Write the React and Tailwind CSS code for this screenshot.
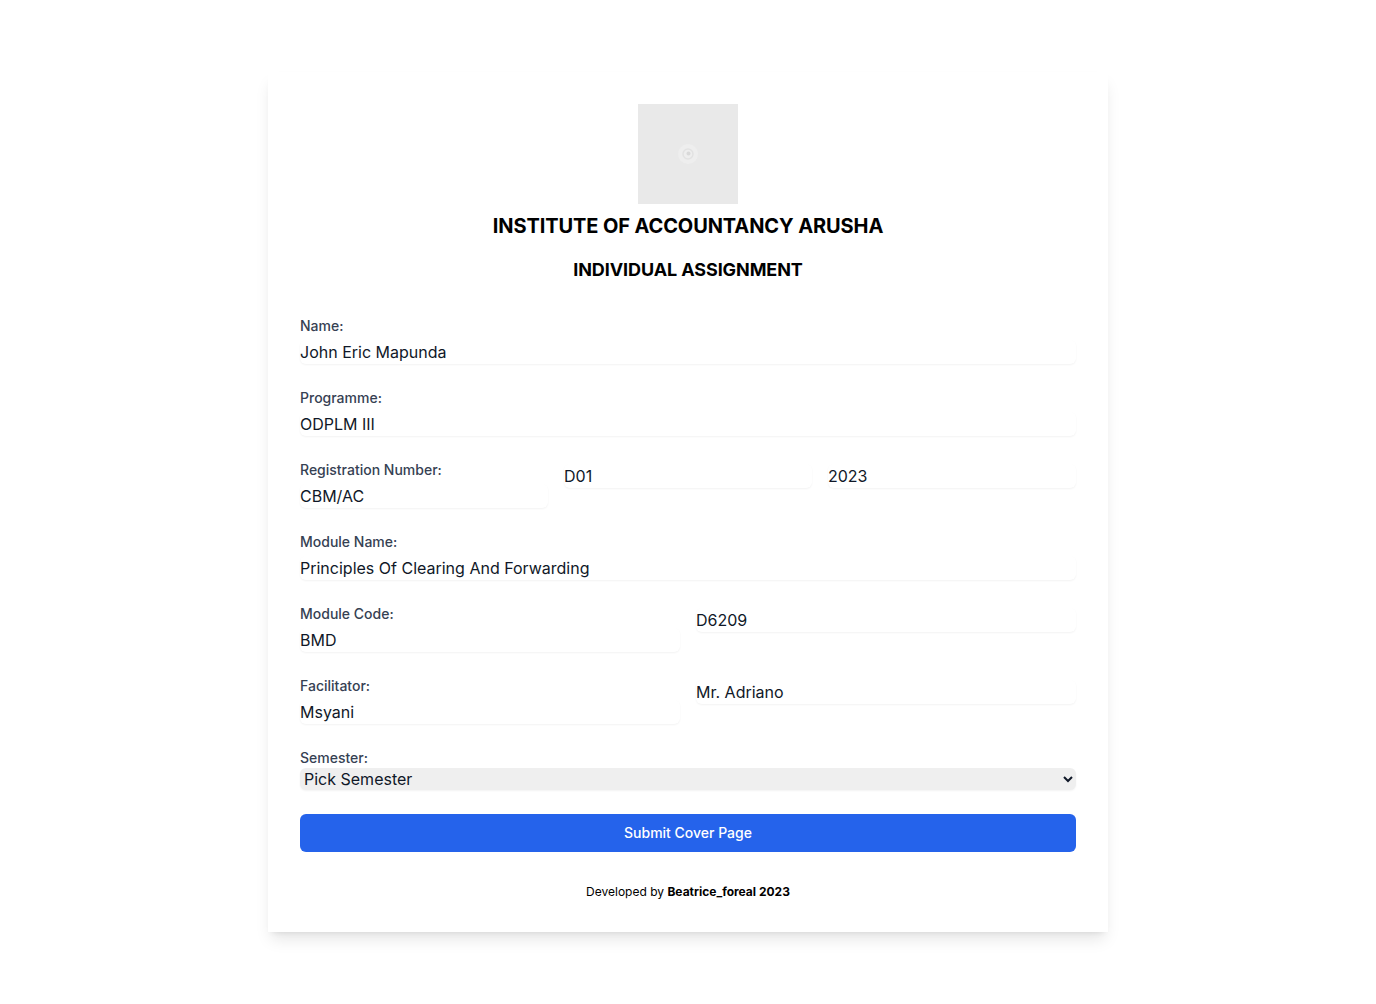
import React from "react";

const inputCls =
  "w-full h-6 text-base leading-6 text-gray-900 rounded-md shadow-xs outline-none bg-white";

function Field({ label, value, className = "" }) {
  return (
    <div className={"flex flex-col " + className}>
      <label className="block text-sm leading-5 text-gray-700 font-medium">{label}</label>
      <input readOnly value={value} className={"mt-1 " + inputCls} />
    </div>
  );
}

function Bare({ value }) {
  return <input readOnly value={value} className={"mt-1 " + inputCls} />;
}

export default function App() {
  return (
    <div className="min-h-screen bg-white flex items-center justify-center" style={{ fontFamily: "Inter, 'Noto Sans', sans-serif" }}>
      <div className="w-[840px] bg-white shadow-lg p-8 flex flex-col">
        <div className="flex justify-center">
          <div className="w-[100px] h-[100px] bg-[#e9e9e9] flex items-center justify-center">
            <svg width="24" height="24" viewBox="0 0 24 24">
              <circle cx="12" cy="12" r="10" fill="#eeeeee" />
              <circle cx="12" cy="12" r="5" fill="none" stroke="#e2e2e2" strokeWidth="1.5" />
              <circle cx="12.5" cy="11.5" r="2" fill="#d9d9d9" />
            </svg>
          </div>
        </div>
        <h1 className="mt-2 text-center text-xl leading-7 font-bold text-black tracking-[-0.1px]">INSTITUTE OF ACCOUNTANCY ARUSHA</h1>
        <h2 className="mt-4 text-center text-lg leading-7 font-bold text-black tracking-[-0.1px]">INDIVIDUAL ASSIGNMENT</h2>

        <div className="mt-8 flex flex-col gap-6">
          <Field label="Name:" value="John Eric Mapunda" />
          <Field label="Programme:" value="ODPLM III" />
          <div className="grid grid-cols-3 gap-4 items-start">
            <Field label="Registration Number:" value="CBM/AC" />
            <Bare value="D01" />
            <Bare value="2023" />
          </div>
          <Field label="Module Name:" value="Principles Of Clearing And Forwarding" />
          <div className="grid grid-cols-2 gap-4 items-start">
            <Field label="Module Code:" value="BMD" />
            <Bare value="D6209" />
          </div>
          <div className="grid grid-cols-2 gap-4 items-start">
            <Field label="Facilitator:" value="Msyani" />
            <Bare value="Mr. Adriano" />
          </div>
          <div className="flex flex-col">
            <label className="block text-sm leading-5 text-gray-700 font-medium">Semester:</label>
            <select
              defaultValue=""
              className="w-full h-[22px] bg-[#efefef] rounded-md shadow-xs text-base text-gray-900 pl-0 pr-1 outline-none"
            >
              <option value="">Pick Semester</option>
              <option>Semester I</option>
              <option>Semester II</option>
            </select>
          </div>
          <button className="w-full h-[38px] bg-[#2563eb] rounded-md text-white text-sm font-medium">
            Submit Cover Page
          </button>
        </div>

        <p className="mt-8 text-center text-xs leading-4 text-black">
          Developed by <span className="font-bold">Beatrice_foreal 2023</span>
        </p>
      </div>
    </div>
  );
}
